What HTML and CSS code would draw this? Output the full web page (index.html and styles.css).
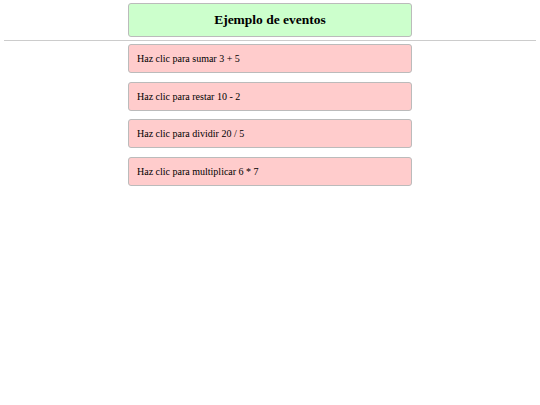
FILE: index.html
```html
<!DOCTYPE html>
<html lang="es">
<head>
<meta charset="utf-8">
<title>Ejemplo de eventos</title>
<link rel="stylesheet" href="styles.css">
</head>
<body>
  <header class="title-box">
    <h1 class="title">Ejemplo de eventos</h1>
  </header>
  <hr class="divider">
  <main class="actions">
    <div class="action">Haz clic para sumar 3 + 5</div>
    <div class="action">Haz clic para restar 10 - 2</div>
    <div class="action">Haz clic para dividir 20 / 5</div>
    <div class="action">Haz clic para multiplicar 6 * 7</div>
  </main>
</body>
</html>
```
FILE: styles.css
```css
body {
  margin: 3px 4px;
  font-family: "Liberation Serif", "Times New Roman", serif;
  color: #000;
  background: #fff;
}

.title-box {
  width: 284px;
  box-sizing: border-box;
  margin: 0 auto;
  height: 34px;
  display: flex;
  align-items: center;
  justify-content: center;
  background: #ccffcc;
  border: 1px solid #bbb;
  border-radius: 3px;
}

.title {
  margin: 0;
  font-size: 13.5px;
  font-weight: bold;
}

.divider {
  margin: 3px 0 3px;
  border: 0;
  border-top: 1px solid #ccc;
  height: 0;
}

.actions {
  width: 284px;
  margin: 0 auto;
  display: flex;
  flex-direction: column;
  gap: 8.6px;
}

.action {
  box-sizing: border-box;
  height: 29px;
  padding: 0 8px;
  display: flex;
  align-items: center;
  background: #ffcccc;
  border: 1px solid #bbb;
  border-radius: 3px;
  font-size: 10px;
}
```
